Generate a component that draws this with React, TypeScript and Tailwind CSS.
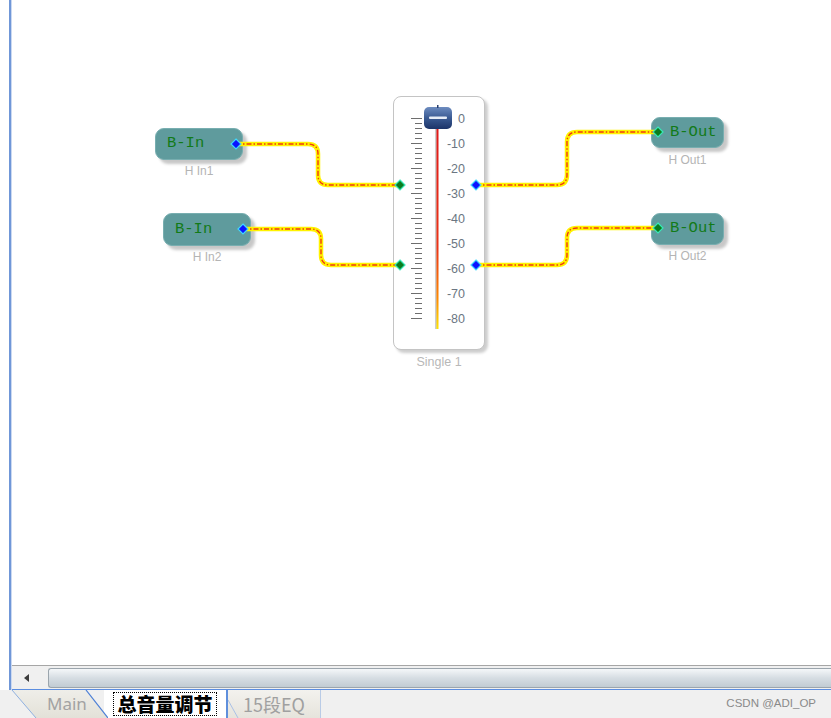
import React from "react";

const TICKS = Array.from({ length: 41 }, (_, i) => i);
const SCALE = ["0", "-10", "-20", "-30", "-40", "-50", "-60", "-70", "-80"];

function Diamond({ x, y, kind }: { x: number; y: number; kind: "in" | "out" }) {
  const fill = kind === "out" ? "#0a14ff" : "#0b7d1e";
  const stroke = kind === "out" ? "#3fd8ff" : "#38e8b8";
  return (
    <path
      d={`M ${x} ${y - 5} L ${x + 5} ${y} L ${x} ${y + 5} L ${x - 5} ${y} Z`}
      fill={fill}
      stroke={stroke}
      strokeWidth={1.2}
    />
  );
}

function Wire({ d }: { d: string }) {
  return (
    <g fill="none">
      <path d={d} stroke="#fff200" strokeWidth={4.5} strokeLinejoin="round" />
      <path d={d} stroke="#f03a10" strokeWidth={1.4} strokeDasharray="5 2 1.5 2" strokeLinejoin="round" />
    </g>
  );
}

export default function App() {
  return (
    <div className="flex h-[718px] w-[831px] flex-col overflow-hidden bg-white font-['Liberation_Sans',Arial,sans-serif]">
      {/* editor area */}
      <div className="flex h-[690px]">
        <div className="w-[9px] bg-white" />
        <div className="w-[3px] border-l-2 border-[#7097d8] bg-[#cbd9f1]" />
        <div className="flex flex-1 flex-col">
          <div className="relative flex-1 overflow-hidden bg-white">
            {/* blocks */}
            <div className="absolute left-[143px] top-[128px] flex w-[88px] flex-col items-center">
              <div className="flex h-[32px] w-[88px] items-center rounded-[9px] border border-[#78aeb0] bg-[#5f9b9d] pl-[11px] shadow-[4px_4px_3px_rgba(0,0,0,0.22)]">
                <span className="font-['Liberation_Mono',monospace] text-[15.5px] text-[#127a18]">B-In</span>
              </div>
              <span className="mt-[4px] text-[12px] leading-[14px] text-[#b4b4b4]">H In1</span>
            </div>
            <div className="absolute left-[151px] top-[213px] flex w-[88px] flex-col items-center">
              <div className="flex h-[33px] w-[88px] items-center rounded-[9px] border border-[#78aeb0] bg-[#5f9b9d] pl-[11px] shadow-[4px_4px_3px_rgba(0,0,0,0.22)]">
                <span className="font-['Liberation_Mono',monospace] text-[15.5px] text-[#127a18]">B-In</span>
              </div>
              <span className="mt-[4px] text-[12px] leading-[14px] text-[#b4b4b4]">H In2</span>
            </div>
            <div className="absolute left-[639px] top-[117px] flex w-[73px] flex-col items-center">
              <div className="flex h-[31px] w-[73px] items-center rounded-[9px] border border-[#78aeb0] bg-[#5f9b9d] pl-[18px] shadow-[4px_4px_3px_rgba(0,0,0,0.22)]">
                <span className="font-['Liberation_Mono',monospace] text-[15.5px] text-[#127a18]">B-Out</span>
              </div>
              <span className="mt-[5px] text-[12px] leading-[14px] text-[#b4b4b4]">H Out1</span>
            </div>
            <div className="absolute left-[639px] top-[213px] flex w-[73px] flex-col items-center">
              <div className="flex h-[32px] w-[73px] items-center rounded-[9px] border border-[#78aeb0] bg-[#5f9b9d] pl-[18px] shadow-[4px_4px_3px_rgba(0,0,0,0.22)]">
                <span className="font-['Liberation_Mono',monospace] text-[15.5px] text-[#127a18]">B-Out</span>
              </div>
              <span className="mt-[4px] text-[12px] leading-[14px] text-[#b4b4b4]">H Out2</span>
            </div>

            {/* fader */}
            <div className="absolute left-[381px] top-[96px] flex w-[92px] flex-col items-center">
              <div className="relative h-[254px] w-[92px] rounded-[8px] border border-[#c4c4c4] bg-white shadow-[3px_3px_3px_rgba(0,0,0,0.2)]">
                <div className="absolute left-[47px] top-[13px] flex flex-col items-end">
                  {SCALE.map((s) => (
                    <span key={s} className="h-[25px] w-[24px] text-right text-[12.5px] leading-[18px] text-[#6b7682]">
                      {s}
                    </span>
                  ))}
                </div>
              </div>
              <span className="mt-[5px] text-[12.5px] leading-[14px] text-[#b8b8b8]">Single 1</span>
            </div>

            {/* drawing layer */}
            <svg className="pointer-events-none absolute left-0 top-0" width={819} height={665} viewBox="12 0 819 665">
              <defs>
                <linearGradient id="lvl" x1="0" y1="0" x2="0" y2="1">
                  <stop offset="0" stopColor="#e01818" />
                  <stop offset="0.6" stopColor="#ec3416" />
                  <stop offset="0.85" stopColor="#ff8a00" />
                  <stop offset="1" stopColor="#ffe600" />
                </linearGradient>
                <linearGradient id="knob" x1="0" y1="0" x2="0" y2="1">
                  <stop offset="0" stopColor="#6d8cc0" />
                  <stop offset="0.5" stopColor="#3a5a92" />
                  <stop offset="1" stopColor="#1c3468" />
                </linearGradient>
              </defs>

              {TICKS.map((i) => (
                <line
                  key={i}
                  x1={i % 5 === 0 ? 411 : 415}
                  x2={422}
                  y1={118.5 + i * 5}
                  y2={118.5 + i * 5}
                  stroke="#6e6e6e"
                  strokeWidth={1}
                />
              ))}
              <rect x={435.5} y={126} width={1} height={203} fill="#9a9a9a" />
              <rect x={436.5} y={126} width={2} height={203} fill="url(#lvl)" />
              <rect x={424} y={107} width={28} height={22} rx={5} fill="url(#knob)" />
              <rect x={437} y={105} width={1.5} height={3} fill="#2a4070" />
              <rect x={429} y={116.5} width={18} height={2.5} rx={1} fill="#e6ecf6" />

              <Wire d="M 236 144 H 308 Q 318 144 318 154 V 175 Q 318 185 328 185 H 400" />
              <Wire d="M 243 229 H 311 Q 321 229 321 239 V 255 Q 321 265 331 265 H 400" />
              <Wire d="M 476 185 H 557 Q 567 185 567 175 V 142 Q 567 132 577 132 H 658" />
              <Wire d="M 476 265 H 557 Q 567 265 567 255 V 238 Q 567 228 577 228 H 658" />

              <Diamond x={236} y={144} kind="out" />
              <Diamond x={243} y={229} kind="out" />
              <Diamond x={400} y={185} kind="in" />
              <Diamond x={400} y={265} kind="in" />
              <Diamond x={476} y={185} kind="out" />
              <Diamond x={476} y={265} kind="out" />
              <Diamond x={658} y={132} kind="in" />
              <Diamond x={658} y={228} kind="in" />
            </svg>
          </div>

          {/* horizontal scrollbar */}
          <div className="flex h-[25px] items-center border-y border-t-[#a6a6a6] border-b-[#5b8de0] bg-[#f0f0f0]">
            <div className="flex h-full w-[30px] items-center justify-center">
              <svg width="6" height="8" viewBox="0 0 6 8">
                <path d="M 5 0 L 0 4 L 5 8 Z" fill="#3c3c3c" />
              </svg>
            </div>
            <div className="ml-[6px] h-[20px] flex-1 rounded-l-[3px] border border-r-0 border-[#9ba5ad] bg-gradient-to-b from-[#f5f7f9] via-[#d6dde3] to-[#c2ccd3]" />
          </div>
        </div>
      </div>

      {/* sheet tabs */}
      <div className="relative flex h-[28px] bg-[#f0f0f0]">
        <div className="relative ml-[10px] w-[98px]">
          <div className="absolute inset-0 bg-gradient-to-b from-[#efeee9] to-[#e3e1d8] [clip-path:polygon(2px_0,76px_0,98px_28px,26px_28px)]" />
          <svg className="absolute inset-0" width="98" height="28">
            <line x1="2" y1="0" x2="26" y2="28" stroke="#8fb0e0" strokeWidth="1" />
            <line x1="76" y1="0" x2="98" y2="28" stroke="#4c7fd6" strokeWidth="1.2" />
          </svg>
          <span className="absolute left-[37px] top-[2px] font-['Noto_Sans',sans-serif] text-[17px] leading-[24px] text-[#a2a2a2]">Main</span>
        </div>
        <div className="-ml-[4px] flex w-[122px] items-center justify-center bg-white">
          <span className="border border-dotted border-black px-[3px] font-['Noto_Sans_CJK_SC',sans-serif] text-[19px] font-black leading-[22px] text-black">
            总音量调节
          </span>
        </div>
        <div className="relative flex w-[95px] items-center justify-center border-l-2 border-r border-l-[#5f8fdc] border-r-[#b9cbe6] bg-gradient-to-b from-[#f3f2ee] to-[#e6e4dc]">
          <svg className="absolute left-0 top-0" width="12" height="28">
            <line x1="0" y1="10" x2="10" y2="28" stroke="#a9c0e6" strokeWidth="1" />
          </svg>
          <span className="font-['Noto_Sans_CJK_SC',sans-serif] text-[18px] leading-[24px] text-[#a0a0a0]">15段EQ</span>
        </div>
        <span className="absolute right-[15px] top-[6px] text-[11.5px] leading-[14px] text-[#8a8a8a]">CSDN @ADI_OP</span>
      </div>
    </div>
  );
}
